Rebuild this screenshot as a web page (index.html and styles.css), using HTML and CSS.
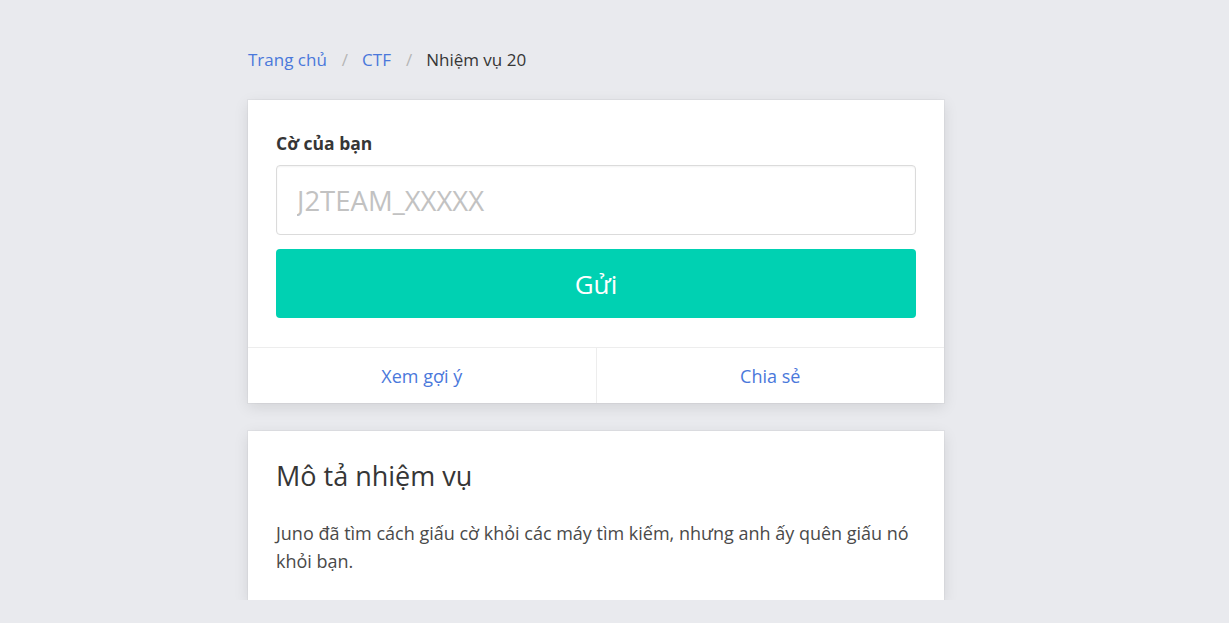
FILE: index.html
```html
<!DOCTYPE html>
<html lang="vi">
<head>
<meta charset="utf-8">
<title>Nhiệm vụ 20</title>
<link rel="stylesheet" href="styles.css">
</head>
<body>
<main class="page">
  <nav class="breadcrumb">
    <a href="#">Trang chủ</a>
    <span class="sep">/</span>
    <a href="#">CTF</a>
    <span class="sep">/</span>
    <span class="current">Nhiệm vụ 20</span>
  </nav>

  <section class="card">
    <div class="card-content">
      <label class="label" for="flag">Cờ của bạn</label>
      <input class="input" id="flag" type="text" placeholder="J2TEAM_XXXXX">
      <button class="button" type="button">Gửi</button>
    </div>
    <footer class="card-footer">
      <a class="card-footer-item" href="#">Xem gợi ý</a>
      <a class="card-footer-item" href="#">Chia sẻ</a>
    </footer>
  </section>

  <section class="card desc">
    <h2 class="title">Mô tả nhiệm vụ</h2>
    <p class="text">Juno đã tìm cách giấu cờ khỏi các máy tìm kiếm, nhưng anh ấy quên giấu nó khỏi bạn.</p>
  </section>
</main>
</body>
</html>
```

FILE: styles.css
```css
* { box-sizing: border-box; }
html, body { margin: 0; padding: 0; }
body {
  background: #e9eaee;
  font-family: "Open Sans", "Noto Sans", sans-serif;
  color: #363636;
  font-size: 16px;
}
.page {
  width: 696px;
  margin-left: 248px;
  padding-top: 47px;
  display: flex;
  flex-direction: column;
}
.breadcrumb {
  display: flex;
  align-items: center;
  height: 26px;
  font-size: 17px;
  line-height: 26px;
  margin-bottom: 27px;
}
.breadcrumb a { color: #4a78db; text-decoration: none; }
.breadcrumb .sep { color: #b5b5b5; padding: 0 14px 0 15px; }
.breadcrumb .current { color: #363636; }

.card {
  background: #fff;
  box-shadow: 0 4px 14px rgba(10, 10, 10, 0.1), 0 0 0 1px rgba(10, 10, 10, 0.03);
}
.card-content {
  padding: 30px 28px 29px;
  display: flex;
  flex-direction: column;
}
.label {
  font-weight: 700;
  font-size: 17.5px;
  line-height: 26px;
  color: #363636;
  margin-bottom: 9px;
}
.input {
  height: 70px;
  border: 1px solid #dbdbdb;
  border-radius: 4px;
  padding: 0 20px;
  font-family: inherit;
  font-size: 27.5px;
  color: #363636;
  box-shadow: inset 0 1px 2px rgba(10, 10, 10, 0.05);
  outline: none;
}
.input::placeholder { color: #c2c2c2; }
.button {
  margin-top: 14px;
  height: 69px;
  border: none;
  border-radius: 4px;
  background: #00d1b2;
  color: #fff;
  font-family: inherit;
  font-size: 26px;
  cursor: pointer;
}
.card-footer {
  display: flex;
  border-top: 1px solid #ededed;
}
.card-footer-item {
  flex: 1;
  height: 55px;
  display: flex;
  align-items: center;
  justify-content: center;
  color: #4a78db;
  text-decoration: none;
  font-size: 18px;
}
.card-footer-item + .card-footer-item { border-left: 1px solid #ededed; }

.desc {
  margin-top: 28px;
  padding: 26px 28px 25px;
}
.title {
  margin: 0 0 24px;
  font-size: 27px;
  font-weight: 400;
  line-height: 38px;
  color: #363636;
}
.text {
  margin: 0;
  font-size: 18px;
  line-height: 28px;
  color: #4a4a4a;
}
```
